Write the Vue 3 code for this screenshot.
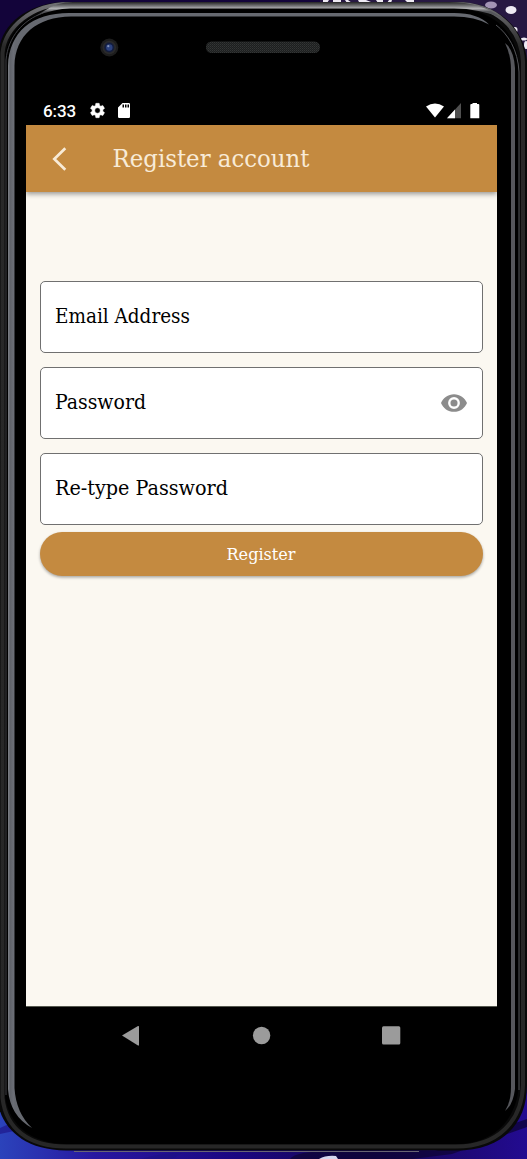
<script setup>
const fields = [
  { id: 'email', label: 'Email Address', width: 135 },
  { id: 'password', label: 'Password', width: 91, eye: true },
  { id: 'confirm', label: 'Re-type Password', width: 173 },
]
</script>

<template>
  <main class="stage">
    <svg class="device" viewBox="0 0 527 1159" aria-hidden="true">
      <defs>
        <linearGradient id="desk" x1="0" y1="0" x2="1" y2="0">
          <stop offset="0" stop-color="#2b43bb" />
          <stop offset=".18" stop-color="#2817a0" />
          <stop offset=".45" stop-color="#1b0781" />
          <stop offset=".7" stop-color="#15054f" />
          <stop offset="1" stop-color="#230b91" />
        </linearGradient>
        <linearGradient id="rim" x1="0" y1="0" x2="0" y2="1">
          <stop offset="0" stop-color="#242424" />
          <stop offset=".25" stop-color="#77777a" />
          <stop offset=".4" stop-color="#b0b0b2" />
          <stop offset=".6" stop-color="#55565a" />
          <stop offset="1" stop-color="#55565a" />
        </linearGradient>
        <linearGradient id="edge" gradientUnits="userSpaceOnUse" x1="0" y1="0" x2="0" y2="1159">
          <stop offset="0" stop-color="#737376" />
          <stop offset=".01" stop-color="#68686b" />
          <stop offset=".04" stop-color="#292929" />
          <stop offset="1" stop-color="#272727" />
        </linearGradient>
        <linearGradient id="glow" gradientUnits="userSpaceOnUse" x1="7" y1="0" x2="15" y2="0">
          <stop offset="0" stop-color="#8a8d92" />
          <stop offset=".4" stop-color="#60636a" />
          <stop offset=".8" stop-color="#6b6e76" />
          <stop offset="1" stop-color="#666970" />
        </linearGradient>
        <pattern id="mesh" width="2" height="2" patternUnits="userSpaceOnUse">
          <rect width="2" height="2" fill="#1d1f1f" />
          <rect width="1" height="1" fill="#343636" />
          <rect x="1" y="1" width="1" height="1" fill="#2a2c2c" />
        </pattern>
      </defs>
      <rect width="527" height="580" fill="#13043a" />
      <rect y="580" width="527" height="579" fill="url(#desk)" />
      <path d="M320 0H527V70H505L450 4H320Z" fill="#271842" />
      <g fill="#eeeaf3">
        <path d="M323 0h6l-2 3h-4zM333 0h8v2h-8zM345 0h3l4 3h-5zM358 0h8l5 2h-12zM376 0h7v3h-5zM389 0h3l-1 3h-4zM405 0h9v2h-7z" />
        <ellipse cx="491" cy="5" rx="6" ry="3.5" fill="#a394b5" />
        <ellipse cx="511" cy="10" rx="5.5" ry="4" />
        <ellipse cx="515" cy="30" rx="2.5" ry="3" />
        <ellipse cx="524" cy="39" rx="3" ry="1.5" />
        <ellipse cx="526" cy="45" rx="2" ry="4" />
      </g>
      <path d="M0 1128q18-9 34-5l-20 8-14 3zM140 1159q25-7 42-6l-10 6z" fill="#1c1183" opacity=".6" />
      <path d="M290 1159q5-8 45-8h100l92-32v8l-75 27-40 5z" fill="#0d0436" opacity=".75" />
      <path d="M319 1159q7-4 17-3l2 3z" fill="#d5d5ee" />

      <path d="M-1 1108V50C2 23 29 2 68 2H456C496 2 524 26 527 61V1085C527 1124 502 1150.500 456 1150.500H66C27 1150.500 5 1131-1 1108Z" fill="#090909" />
      <path d="M2.500 1098V53C5 27 32 4 68 4H456C496 4 522 29 523 62V1085C522 1121 498 1146.500 456 1146.500H66C29 1146.500 6 1129 2.500 1098Z" fill="none" stroke="url(#edge)" stroke-width="4" />
      <path d="M5 1096V56C9 27 31 9 68 9H456C491 9 515 30 518.800 62V1085C517 1118 495 1144 456 1144H66C34 1144 9 1127 5 1096Z" fill="#000" />
      <path d="M44 11Q57 2 73 2H449Q481 2 502 18Q479 8.500 454 8.500H70Q55 8.500 36 16Z" fill="url(#rim)" />
      <path d="M519 1090V72C518 50 508 34 496 25" fill="none" stroke="#55565a" stroke-width="1" />
      <path d="M6 1095V60C8 37 23 20 43 13" fill="none" stroke="#404145" stroke-width="1" />
      <path d="M8 1089V66C9 32 32 13 69 13H454Q478 13 489 24.500Q475 16.500 454 16.500H71C37 17 15 35 14.500 66V1088Q16 1113 32 1128Q10 1116 8 1089Z" fill="url(#glow)" />
      <path d="M505 43Q514 50 515 68V1089Q513 1105 505 1111Q511 1102 511 1087V70Q511 55 505 43Z" fill="#56575c" />
      <path d="M74 1151.500H419" stroke="#686573" stroke-width="1" />

      <circle cx="109.300" cy="47.500" r="9" fill="#1d1d1d" />
      <circle cx="109.300" cy="47.500" r="6.800" fill="#2a2a2b" />
      <circle cx="109.300" cy="47.500" r="5" fill="#141d3d" />
      <circle cx="109.300" cy="47.500" r="3.200" fill="#2c427f" />
      <circle cx="108.300" cy="46.200" r="1.100" fill="#8292b8" />
      <rect x="206" y="41.500" width="114" height="11.500" rx="5.500" fill="url(#mesh)" />
    </svg>

    <section class="screen">
      <header class="status">
        <span class="time">6:33</span>
        <svg class="gear" viewBox="2 2 20 20"><path fill="#fff" stroke="#fff" stroke-width=".6" d="M19.140 12.940c.04-.3.06-.61.06-.94s-.02-.64-.07-.94l2.030-1.580a.49.49 0 0 0 .12-.61l-1.920-3.320a.49.49 0 0 0-.59-.22l-2.390.96a7 7 0 0 0-1.620-.94l-.36-2.540a.48.48 0 0 0-.48-.41h-3.840a.48.48 0 0 0-.47.41l-.36 2.540a7 7 0 0 0-1.620.94l-2.390-.96a.49.49 0 0 0-.59.22L2.740 8.870a.48.48 0 0 0 .12.610l2.030 1.580a7 7 0 0 0 0 1.880l-2.030 1.580a.49.49 0 0 0-.12.610l1.920 3.320c.12.220.37.290.59.220l2.390-.96c.5.380 1.030.7 1.620.94l.36 2.540c.05.240.24.410.48.410h3.840c.24 0 .44-.17.47-.41l.36-2.540a7 7 0 0 0 1.620-.94l2.390.96c.22.080.47 0 .59-.22l1.920-3.320a.48.480 0 0 0-.12-.61zM12 15.600a3.600 3.600 0 1 1 0-7.200 3.600 3.600 0 0 1 0 7.200z" /></svg>
        <svg class="sd" viewBox="0 0 12 15"><path fill="#fff" fill-rule="evenodd" d="M4.500 0H10.800Q12 0 12 1.200V13.800Q12 15 10.800 15H1.200Q0 15 0 13.800V4.500ZM4.500 1.500V4.500H6V1.500ZM7 1.500V4.500H8.500V1.500ZM9.500 1.500V4.500H11V1.500Z" /></svg>
        <svg class="signals" viewBox="0 0 54 16">
          <path d="M0 3.500Q9-2.600 18 3.500L9 14.500Z" fill="#fff" />
          <path d="M21 15.300L35 0V15.300Z" fill="#505050" />
          <path d="M21 15.300L29 6.600V15.300Z" fill="#fff" />
          <path d="M46.500 0H51V1H52.500Q53.300 1 53.300 2V15.300H44.300V2Q44.300 1 45.200 1H46.500Z" fill="#fff" />
        </svg>
      </header>
      <header class="appbar">
        <svg class="back" viewBox="0 0 15 24"><path d="M13.300 1.300L2.300 12L13.300 22.700" fill="none" stroke="#f8ebd7" stroke-width="2.700" /></svg>
        <svg class="title" viewBox="0 0 200 36"><text x="-.5" y="26" textLength="197" lengthAdjust="spacingAndGlyphs">Register account</text></svg>
      </header>
      <form class="form" @submit.prevent>
        <div v-for="field in fields" :key="field.id" class="field">
          <svg class="label" viewBox="0 0 200 30"><text x="0" y="22" :textLength="field.width" lengthAdjust="spacingAndGlyphs">{{ field.label }}</text></svg>
          <svg v-if="field.eye" class="eye" viewBox="1 4.500 22 15"><path fill="#8c8c8c" d="M12 4.500C7 4.500 2.730 7.610 1 12c1.730 4.390 6 7.500 11 7.500s9.270-3.110 11-7.500c-1.730-4.390-6-7.500-11-7.500zM12 17a5 5 0 1 1 0-10 5 5 0 0 1 0 10zm0-8a3 3 0 1 0 0 6 3 3 0 0 0 0-6z" /></svg>
        </div>
        <button class="submit"><svg viewBox="0 0 70 26"><text x="-.5" y="18.500" textLength="69" lengthAdjust="spacingAndGlyphs">Register</text></svg></button>
      </form>
    </section>
    <nav class="navigation">
      <svg viewBox="0 0 471 30">
        <path d="M96 14.500L112 5Q113 4.500 113 6V23.500Q113 25 112 24.500Z" fill="#9b9b9b" />
        <circle cx="235.600" cy="14.500" r="8.700" fill="#9b9b9b" />
        <rect x="356" y="5.200" width="18.300" height="18.300" rx="1.500" fill="#9b9b9b" />
      </svg>
    </nav>
  </main>
</template>

<style>
body { margin: 0; background: #000; }
</style>

<style scoped>
.stage { position: relative; width: 527px; height: 1159px; overflow: hidden; box-sizing: border-box; padding: 94px 30px 0 26px; }
.device { position: absolute; inset: 0; width: 527px; height: 1159px; display: block; }
.screen { position: relative; height: 913px; display: flex; flex-direction: column; background: #fbf8f1; border-bottom: 1px solid #55584f; box-sizing: border-box; }
.status { height: 31px; background: #000; display: flex; align-items: flex-start; padding: 9px 17px 0; box-sizing: border-box; }
.time { font: 500 17px/17px Roboto, sans-serif; color: #fff; width: 47px; letter-spacing: -.1px; }
.gear { width: 15px; height: 15px; overflow: visible; }
.sd { width: 12px; height: 15px; margin-left: 13px; }
.signals { width: 54px; height: 16px; margin-left: auto; }
.appbar { height: 67px; flex-shrink: 0; background: #c48a40; box-shadow: 0 2px 5px #0006; display: flex; align-items: center; padding-left: 26px; clip-path: inset(0 0 -12px); box-sizing: border-box; }
.back { width: 15px; height: 24px; }
.title { width: 200px; height: 36px; margin-left: 46px; overflow: visible; }
text { font-family: "DejaVu Serif Condensed", "DejaVu Serif", serif; }
.title text { font-size: 24.500px; fill: #f8ebd7; }
.form { padding: 88.600px 14px 0; display: flex; flex-direction: column; }
.field { height: 72px; margin-bottom: 14.400px; box-sizing: border-box; border: 1.300px solid #707070; border-radius: 5px; background: #fff; display: flex; align-items: center; justify-content: space-between; padding: 0 15px 2px 14px; }
.field:nth-child(3) { margin-bottom: 7px; }
.label { width: 200px; height: 30px; }
.label text { font-size: 20px; fill: #000; }
.eye { width: 26px; height: 18px; margin-top: 2px; }
.submit { height: 43.500px; border: 0; border-radius: 22px; background: #c48a40; box-shadow: 0 1.500px 3px #0005; display: flex; justify-content: center; align-items: center; padding: 0; }
.submit svg { width: 70px; height: 26px; overflow: visible; }
.submit text { font-size: 17px; fill: #fff; }
.navigation { position: relative; height: 58px; display: flex; align-items: center; }
.navigation svg { width: 471px; height: 30px; }
</style>
